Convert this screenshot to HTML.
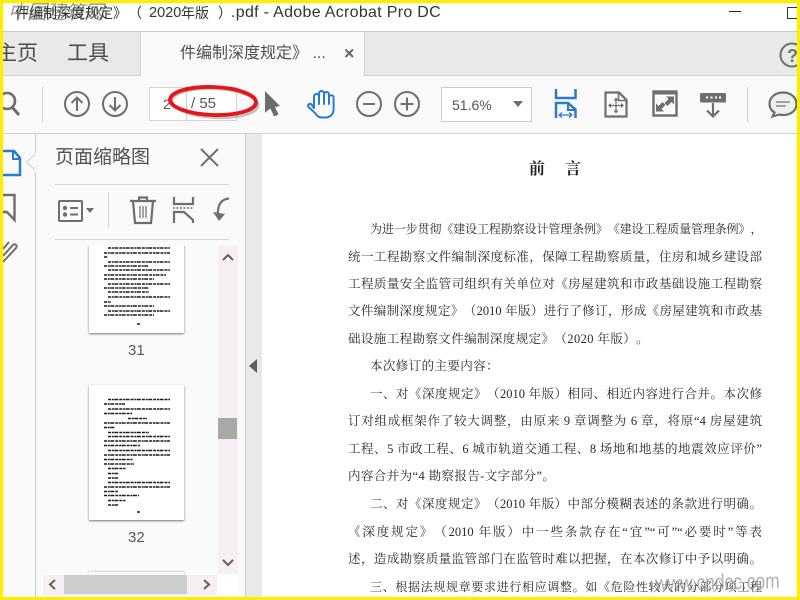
<!DOCTYPE html>
<html lang="zh"><head><meta charset="utf-8"><title>PDF</title>
<style>
html,body{margin:0;padding:0}
body{width:800px;height:600px;position:relative;overflow:hidden;background:#fff;font-family:"Liberation Sans","Noto Sans CJK SC",sans-serif;text-spacing-trim:space-all}
.a{position:absolute}
.t{position:absolute;white-space:nowrap}
.l{position:absolute;left:348px;width:414px;height:18px;font:12.5px/18px "Liberation Serif","Noto Serif CJK SC",serif;color:#2a2a2a;text-align:justify;text-align-last:justify;white-space:nowrap}
.i{left:370px;width:392px}
.n{width:auto;text-align-last:left;letter-spacing:.4px}
.s{font-size:12px;letter-spacing:-.45px}
svg{position:absolute;overflow:visible}
.h{top:3px;line-height:20px;font-size:14px;color:#333}
</style></head><body>
<!-- title bar -->
<div class="t" style="left:8px;top:0;font-size:20px;line-height:26px;color:#777;opacity:.75;letter-spacing:-1px;font-style:italic">中国建筑网</div>
<div class="t h" style="left:15px">件编制深度规定》</div>
<div class="t h" style="left:128px">（</div>
<div class="t h" style="left:149px;font-size:14.500px">2020</div>
<div class="t h" style="left:181px">年版</div>
<div class="t h" style="left:218px">）</div>
<div class="t h" style="left:231px;font-size:16px;letter-spacing:.3px">.pdf - Adobe Acrobat Pro DC</div>
<div class="a" style="left:729px;top:11px;width:12px;height:1px;background:#222"></div>
<div class="a" style="left:787px;top:7px;width:11px;height:10px;border:1px solid #333"></div>
<div class="a" style="left:0;top:31px;width:800px;height:1px;background:#c8c8c8"></div>
<!-- tab bar -->
<div class="a" style="left:0;top:32px;width:800px;height:43px;background:#e9e9e9"></div>
<div class="a" style="left:0;top:75px;width:800px;height:1px;background:#cfcfcf"></div>
<div class="a" style="left:140px;top:32px;width:225px;height:44px;background:#fafafa;border-left:1px solid #d0d0d0;border-right:1px solid #d0d0d0;box-sizing:border-box"></div>
<div class="t" style="left:-4px;top:40px;font-size:21px;line-height:28px;color:#4b4b4b">主页</div>
<div class="t" style="left:67px;top:40px;font-size:21px;line-height:28px;color:#4b4b4b">工具</div>
<div class="t" style="left:180px;top:42px;font-size:16px;line-height:24px;color:#4b4f57">件编制深度规定》 ...</div>
<svg style="left:344px;top:48px" width="11" height="11"><path d="M1.500 1.500L9 9M9 1.500L1.500 9" stroke="#666" stroke-width="2"/></svg>
<svg style="left:777px;top:42px" width="21" height="26"><circle cx="15" cy="13" r="11.500" fill="none" stroke="#707070" stroke-width="2"/><text x="10" y="20" font-size="18" font-weight="bold" fill="#707070" font-family="Liberation Sans">?</text></svg>
<!-- toolbar -->
<div class="a" style="left:0;top:76px;width:800px;height:57px;background:#fafafa"></div>
<div class="a" style="left:0;top:133px;width:800px;height:1px;background:#d0d0d0"></div>
<svg style="left:0;top:88px" width="22" height="30"><circle cx="7" cy="13" r="8" fill="none" stroke="#6e6e6e" stroke-width="2.600"/><path d="M12 19l7 8" stroke="#6e6e6e" stroke-width="3"/></svg>
<div class="a" style="left:42px;top:87px;width:1px;height:35px;background:#d5d5d5"></div>
<svg style="left:64px;top:90px" width="66" height="28" fill="none" stroke="#6e6e6e" stroke-width="2"><circle cx="13" cy="14" r="12"/><path d="M13 21V7.500M7.500 13L13 7.500 18.500 13"/><circle cx="51" cy="14" r="12"/><path d="M51 7V20.500M45.500 15L51 20.500 56.500 15"/></svg>
<div class="a" style="left:149px;top:87px;width:88px;height:34px;background:#fff;border:1px solid #d3d3d3;box-sizing:border-box"></div>
<div class="a" style="left:186px;top:87px;width:1px;height:34px;background:#d3d3d3"></div>
<div class="t" style="left:163px;top:94px;font-size:14px;line-height:20px;color:#555">2</div>
<div class="t" style="left:191px;top:94px;font-size:15px;line-height:20px;color:#555">/ 55</div>
<svg style="left:165px;top:82px" width="100" height="44"><ellipse cx="50" cy="21" rx="43" ry="14.500" fill="none" stroke="#888" stroke-width="3" opacity=".5" transform="rotate(3 50 21)"/><ellipse cx="48" cy="19" rx="43" ry="14" fill="none" stroke="#e8141c" stroke-width="3.800" transform="rotate(2 48 19)"/></svg>
<svg style="left:264px;top:90px" width="18" height="28"><path d="M1 1L16 16 11 17 14.500 24.500 10 26.500 6.500 18.500 1 22.500Z" fill="#6c6c6c"/></svg>
<svg style="left:307px;top:90px" width="28" height="29" fill="none" stroke="#2a7bd0" stroke-width="2" stroke-linecap="round" stroke-linejoin="round"><path d="M7 18V6.500a2.500 2.500 0 0 1 5 0V14M12 14V3.500a2.500 2.500 0 0 1 5 0V14M17 14V4.500a2.500 2.500 0 0 1 5 0V14M22 14V7.500a2.300 2.300 0 0 1 4.600 0V19c0 5-3.500 8.500-8 8.500h-3c-4 0-5.500-1.500-7.500-4.500L1.500 17c-1.500-2.500 1.500-4 3-2.500L7 18"/></svg>
<svg style="left:356px;top:90px" width="64" height="28" fill="none" stroke="#6e6e6e" stroke-width="2"><circle cx="13" cy="14" r="12"/><path d="M7 14H19"/><circle cx="51" cy="14" r="12"/><path d="M44.500 14H57.500M51 7.500V20.500"/></svg>
<div class="a" style="left:441px;top:87px;width:91px;height:35px;background:#fff;border:1px solid #ccc;box-sizing:border-box"></div>
<div class="t" style="left:452px;top:95px;font-size:14px;line-height:20px;color:#555">51.6%</div>
<svg style="left:513px;top:101px" width="12" height="7"><path d="M0 0H10L5 6Z" fill="#6e6e6e"/></svg>
<svg style="left:554px;top:89px" width="24" height="30" fill="none" stroke="#2a7bd0" stroke-width="2.500"><path d="M2 0V9H21.500V0"/><path d="M2 29V14H14L21.500 20.500V29"/><path d="M14 14V21H21.500" stroke-width="2"/><path d="M5 26H18M8 23.500L5 26 8 28.500M15 23.500L18 26 15 28.500" stroke-width="1.200"/></svg>
<svg style="left:604px;top:91px" width="24" height="27" fill="none" stroke="#6e6e6e" stroke-width="2.200"><path d="M1.500 1.500H15L22.500 9V25.500H1.500Z"/><path d="M14.500 1.500V9.500H22.500" stroke-width="1.600"/><path d="M12 9V20M6 14.500H18" stroke-width="1.200"/><path d="M12 6.500L14.500 9.500H9.500ZM12 22.500L14.500 19.500H9.500ZM4 14.500L7 12V17ZM20 14.500L17 12V17Z" fill="#6e6e6e" stroke="none"/></svg>
<svg style="left:652px;top:90px" width="26" height="27"><rect x="1.500" y="1.500" width="23" height="24" fill="none" stroke="#6e6e6e" stroke-width="2.400"/><rect x="1" y="1" width="24" height="3.500" fill="#6e6e6e"/><path d="M14 6.500H22V14.500L19.500 12 15.500 16 12.500 13 16.500 9ZM12 21.500H4V13.500L6.500 16 10.500 12 13.500 15 9.500 19Z" fill="#6e6e6e"/></svg>
<svg style="left:699px;top:92px" width="28" height="26"><rect x="1" y="1" width="26" height="9.500" rx="1.500" fill="#6e6e6e"/><path d="M7 4.500h2v2H7zM11.500 4.500h2v2h-2zM16 4.500h2v2h-2zM20 4.500h2v2h-2z" fill="#fff"/><path d="M14 11V24M8 18.500L14 24.500 20 18.500" fill="none" stroke="#6e6e6e" stroke-width="2.200"/></svg>
<div class="a" style="left:747px;top:87px;width:1px;height:35px;background:#d0d0d0"></div>
<svg style="left:768px;top:91px" width="30" height="29"><path d="M15 1.500C6.500 1.500 1.500 7 1.500 13C1.500 17 4 20 6.500 21.500L4.500 25.500 11.500 23.500C12.500 24 14 24 15 24C24 24 28.500 18.500 28.500 13S24 1.500 15 1.500Z" fill="#efefef" stroke="#6e6e6e" stroke-width="2.200"/><path d="M8 11H22M8 15H18" stroke="#8a8a8a" stroke-width="1.500"/></svg>
<!-- left rail + panel -->
<div class="a" style="left:0;top:134px;width:35px;height:466px;background:#fafafa"></div>
<div class="a" style="left:35px;top:134px;width:1px;height:466px;background:#c9c9c9"></div>
<div class="a" style="left:36px;top:134px;width:209px;height:466px;background:#fafafa"></div>
<svg style="left:3px;top:149px" width="18" height="30" fill="none" stroke="#2a7bd0" stroke-width="2.500"><path d="M-2 2H11L17 9V26H-2"/><path d="M10 2V10H17" stroke-width="2"/></svg>
<svg style="left:26px;top:153px" width="11" height="20"><path d="M10 .5L.5 9 10 18" fill="#fafafa" stroke="#d0d0d0"/><path d="M10 0V19" stroke="#fafafa" stroke-width="2"/></svg>
<svg style="left:3px;top:193px" width="14" height="30" fill="none" stroke="#6e6e6e" stroke-width="2.400"><path d="M-2 2H11.500V27L4 19H-2"/></svg>
<svg style="left:3px;top:236px" width="16" height="30" fill="none" stroke="#6e6e6e" stroke-width="2"><path d="M0 13L6 6M0 20L10 9c2-2 5 .5 3 3L0 26"/></svg>
<div class="t" style="left:55px;top:144px;font-size:19px;line-height:28px;color:#505050">页面缩略图</div>
<svg style="left:200px;top:148px" width="19" height="19"><path d="M1 1L18 18M18 1L1 18" stroke="#707070" stroke-width="2"/></svg>
<div class="a" style="left:55px;top:184px;width:174px;height:1px;background:#d3d3d3"></div>
<div class="a" style="left:55px;top:239px;width:174px;height:1px;background:#d3d3d3"></div>
<div class="a" style="left:108px;top:193px;width:1px;height:35px;background:#d3d3d3"></div>
<svg style="left:58px;top:200px" width="36" height="25"><rect x="1" y="1" width="23" height="20" rx="1" fill="none" stroke="#6e6e6e" stroke-width="2"/><circle cx="7" cy="8" r="2.200" fill="#6e6e6e"/><circle cx="7" cy="14.500" r="2.200" fill="#6e6e6e"/><path d="M12 8H20M12 14.500H20" stroke="#6e6e6e" stroke-width="2"/><path d="M28 8H36L32 13Z" fill="#6e6e6e"/></svg>
<svg style="left:130px;top:196px" width="26" height="29" fill="none" stroke="#6e6e6e" stroke-width="2.200"><path d="M0 5H26M9 5V1.500H17V5M3 5L5 27H21L23 5"/><path d="M10 10V22M13 10V22M16 10V22" stroke-width="1.200"/></svg>
<svg style="left:172px;top:197px" width="23" height="28" fill="none" stroke="#6e6e6e" stroke-width="2.200"><path d="M2 0V7H21V0"/><path d="M1 11H22" stroke-dasharray="2 1.500" stroke-width="1.500"/><path d="M2 26V15H12L21 23V26"/></svg>
<svg style="left:212px;top:197px" width="18" height="27" fill="none" stroke="#6e6e6e" stroke-width="2.200"><path d="M17 1.500C10 2 5 7 6 19"/><path d="M1 15L7 24 13 17" stroke="none" fill="#6e6e6e"/></svg>
<!-- thumbnails clipped -->
<div class="a" style="left:36px;top:246px;width:182px;height:328px;overflow:hidden">
 <div class="a" style="left:53px;top:-20px;width:95px;height:107px;background:#fff;box-shadow:0 1px 2px #777"></div>
 <svg style="left:53px;top:0" width="95" height="90" fill="none" stroke="#1c1c1c" stroke-width="1.500" stroke-dasharray="3 .8 2 .5 4 1"><path d="M19 2H81M15 7H81M15 11H19M19 16H81M15 20H59M19 24H81M15 29H77M15 33H65M19 38H81M15 42H60M19 46H60M19 51H81M15 56H22M15 60H65M19 65H81M15 69H65M48 78H51"/></svg>
 <div class="a" style="left:53px;top:139px;width:95px;height:135px;background:#fff;box-shadow:0 1px 2px #777"></div>
 <svg style="left:53px;top:139px" width="95" height="135" fill="none" stroke="#1c1c1c" stroke-width="1.500" stroke-dasharray="3 .8 2 .5 4 1"><path d="M19 14.500H81M15 19H36M19 24H81M15 28.500H43M39 33.500H58M15 38H81M15 42.500H26M19 47.500H60M19 51.500H81M15 56H81M15 60.500H51M19 65.500H81M15 70H81M15 74.500H44M15 79H45M19 83.500H37M19 88.500H29M19 93H29M19 97.500H81M15 102H81M15 106.500H29M15 110.500H50M19 115.500H37M19 120H29M48 127H51"/></svg>
 <div class="a" style="left:53px;top:326px;width:95px;height:20px;background:#fff;box-shadow:0 0 2px #999"></div>
</div>
<div class="t" style="left:128px;top:342px;font-size:15px;line-height:18px;color:#555">31</div>
<div class="t" style="left:128px;top:529px;font-size:15px;line-height:18px;color:#555">32</div>
<!-- scrollbars -->
<div class="a" style="left:218px;top:246px;width:20px;height:328px;background:#f6eff3"></div>
<div class="a" style="left:218px;top:418px;width:19px;height:21px;background:#a8a8a6"></div>
<svg style="left:222px;top:253px" width="12" height="8"><path d="M1 7L6 2 11 7" fill="none" stroke="#6a5f59" stroke-width="2"/></svg>
<svg style="left:222px;top:559px" width="12" height="8"><path d="M1 1L6 6 11 1" fill="none" stroke="#6a5f59" stroke-width="2"/></svg>
<div class="a" style="left:43px;top:575px;width:174px;height:20px;background:#f6eff3"></div>
<div class="a" style="left:64px;top:575px;width:123px;height:19px;background:#cdcdcd"></div>
<div class="a" style="left:217px;top:575px;width:21px;height:20px;background:#fff"></div>
<svg style="left:48px;top:579px" width="9" height="12"><path d="M7 1L2 5.500 7 10" fill="none" stroke="#6a5f59" stroke-width="2"/></svg>
<svg style="left:202px;top:579px" width="9" height="12"><path d="M2 1L7 5.500 2 10" fill="none" stroke="#6a5f59" stroke-width="2"/></svg>
<!-- splitter -->
<div class="a" style="left:245px;top:134px;width:1px;height:466px;background:#c9c9c9"></div>
<div class="a" style="left:246px;top:134px;width:16px;height:466px;background:#e9e9e9"></div>
<svg style="left:249px;top:359px" width="9" height="15"><path d="M8 0V14L0 7Z" fill="#5f5f5f"/></svg>
<!-- page -->
<div class="a" style="left:262px;top:134px;width:538px;height:466px;background:#fff"></div>
<div class="t" style="left:529px;top:159px;font:bold 16px/22px 'Liberation Serif','Noto Serif CJK SC',serif;color:#222;letter-spacing:20px">前言</div>
<div class="l i s" style="top:220px">为进一步贯彻《建设工程勘察设计管理条例》《建设工程质量管理条例》，</div>
<div class="l" style="top:248px">统一工程勘察文件编制深度标准，保障工程勘察质量，住房和城乡建设部</div>
<div class="l" style="top:275px">工程质量安全监管司组织有关单位对《房屋建筑和市政基础设施工程勘察</div>
<div class="l" style="top:302px">文件编制深度规定》（2010 年版）进行了修订，形成《房屋建筑和市政基</div>
<div class="l n" style="top:330px">础设施工程勘察文件编制深度规定》（2020 年版）。</div>
<div class="l i n" style="top:357px">本次修订的主要内容：</div>
<div class="l i" style="top:385px">一、对《深度规定》（2010 年版）相同、相近内容进行合并。本次修</div>
<div class="l" style="top:412px">订对组成框架作了较大调整，由原来 9 章调整为 6 章，将原“4 房屋建筑</div>
<div class="l" style="top:440px">工程、5 市政工程、6 城市轨道交通工程、8 场地和地基的地震效应评价”</div>
<div class="l n" style="top:467px">内容合并为“4 勘察报告-文字部分”。</div>
<div class="l i" style="top:495px">二、对《深度规定》（2010 年版）中部分模糊表述的条款进行明确。</div>
<div class="l" style="top:523px">《深度规定》（2010 年版）中一些条款存在“宜”“可”“必要时”等表</div>
<div class="l" style="top:550px">述，造成勘察质量监管部门在监管时难以把握，在本次修订中予以明确。</div>
<div class="l i s" style="top:578px;letter-spacing:0">三、根据法规规章要求进行相应调整。如《危险性较大的分部分项工程</div>
<div class="t" style="left:655px;top:570px;font-size:22px;line-height:28px;color:#8f8f8f;opacity:.7;transform-origin:0 50%;transform:scaleX(.79) rotate(-1deg)">www.cndcc.com</div>
<!-- yellow frame -->
<div class="a" style="left:0;top:0;width:800px;height:3px;background:#ffec00"></div>
<div class="a" style="left:0;top:0;width:3px;height:600px;background:#ffec00"></div>
<div class="a" style="left:797px;top:0;width:3px;height:600px;background:#ffec00"></div>
<div class="a" style="left:0;top:597px;width:800px;height:3px;background:#ffec00"></div>
</body></html>
